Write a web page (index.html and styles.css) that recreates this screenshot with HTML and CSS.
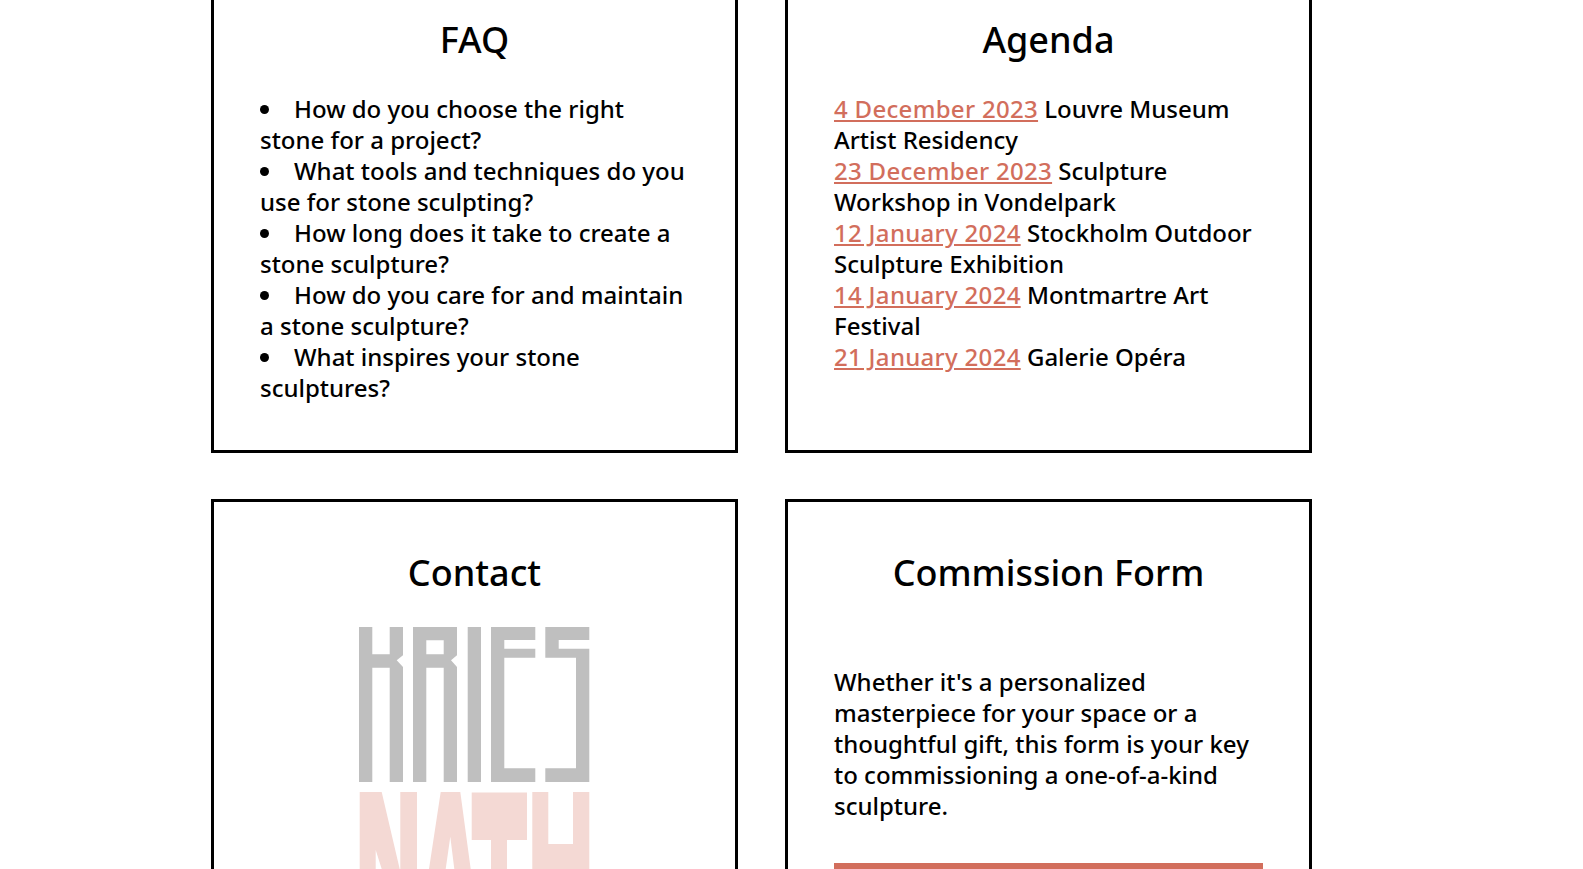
FILE: index.html
```html
<!DOCTYPE html>
<html>
<head>
	<meta charset="UTF-8">
	<title>Kries Nath</title>
	<link rel="stylesheet" href="styles.css">
</head>
<body>
	<div class="cards">
		<section class="card card-top">
			<h2>FAQ</h2>
			<ul class="faq">
				<li>How do you choose the right stone for a project?</li>
				<li>What tools and techniques do you use for stone sculpting?</li>
				<li>How long does it take to create a stone sculpture?</li>
				<li>How do you care for and maintain a stone sculpture?</li>
				<li>What inspires your stone sculptures?</li>
			</ul>
		</section>
		<section class="card card-top">
			<h2>Agenda</h2>
			<p class="agenda">
				<a href="#">4 December 2023</a> Louvre Museum Artist Residency<br>
				<a href="#">23 December 2023</a> Sculpture Workshop in Vondelpark<br>
				<a href="#">12 January 2024</a> Stockholm Outdoor Sculpture Exhibition<br>
				<a href="#">14 January 2024</a> Montmartre Art Festival<br>
				<a href="#">21 January 2024</a> Galerie Opéra
			</p>
		</section>
		<section class="card card-bottom">
			<h2>Contact</h2>
			<!-- logo: KRIES on top, NATH under it, cut off by the window -->
			<svg class="logo" viewBox="0 0 230.5 242" role="img" aria-label="Kries Nath">
				<g fill="#bfbfbf">
					<path d="M0 0H13.3V27.3H30.7V0H44V28.3L37.7 33.3L44 40V155H30.7V40.7H13.3V155H0Z"/>
					<path fill-rule="evenodd" d="M54 0H98V28.3L92 33.3L98 40V155H84.7V40.7H67.3V155H54ZM67.3 13.3V27.3H84.7V13.3Z"/>
					<rect x="108.7" y="0" width="13.3" height="155"/>
					<path d="M132 0H176.3V13H145.3V21.7H176.3V30.7H145.3V141.3H176.3V155H132Z"/>
					<path d="M186.3 0H230.3V13H199.7V21.7H230.3V155H186.3V141.3H217V30.7H186.3Z"/>
				</g>
				<g fill="#f4d9d4">
					<path d="M0.7 165H22.7L40.7 242H41.3V165H58V242H22.7L16.7 223V242H0.7Z"/>
					<path d="M81.7 165H101.3L111.7 242H95.3L91.3 209.7L86.7 242H70Z"/>
					<path d="M112.7 165.5H168V213H148V242H132V213H112.7Z"/>
					<path d="M173.3 165H189.3V217H214V165H230.3V242H173.3Z"/>
				</g>
			</svg>
		</section>
		<section class="card card-bottom">
			<h2>Commission Form</h2>
			<p class="intro">Whether it's a personalized masterpiece for your space or a thoughtful gift, this form is your key to commissioning a one-of-a-kind sculpture.</p>
			<div class="bar"></div>
		</section>
	</div>
</body>
</html>
```

FILE: styles.css
```css
* {
	padding: 0;
	margin: 0;
	box-sizing: border-box;
}

body {
	height: 100vh;
	overflow: hidden;
	background: #fff;
	color: #000;
	font-family: "Noto Sans", sans-serif;
	font-size: 24px;
	font-weight: 500;
	line-height: 31px;
}

.cards {
	display: grid;
	grid-template-columns: 527px 527px;
	grid-template-rows: 453px 1fr;
	gap: 46px 47px;
	height: 869px;
	padding-left: 211px;
}

.card {
	border: 3px solid #000;
	padding: 0 46px;
	overflow: hidden;
}

.card-top {
	border-top: 0;
	padding-top: 19px;
}

.card-bottom {
	border-bottom: 0;
	padding-top: 50px;
}

h2 {
	font-size: 36px;
	font-weight: 500;
	line-height: 42px;
	text-align: center;
}

.faq {
	margin-top: 32px;
	list-style-position: inside;
}

.agenda {
	margin-top: 32px;
}

.agenda a {
	color: #d26e5c;
	letter-spacing: 0.3px;
}

.logo {
	display: block;
	width: 230.5px;
	height: 242px;
	margin: 33px auto 0;
}

.intro {
	margin-top: 72px;
}

.bar {
	height: 30px;
	margin-top: 42px;
	background: #d26e5c;
}
```
